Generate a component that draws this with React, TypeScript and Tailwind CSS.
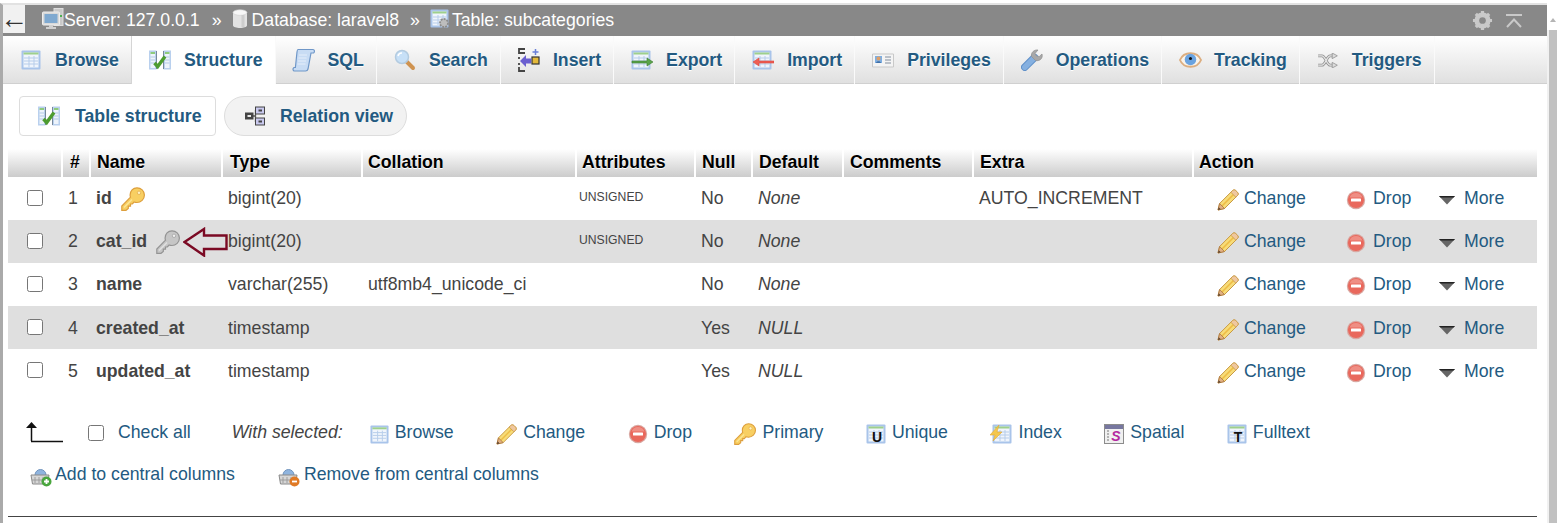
import React from "react";

type IP = { className?: string };

const GridTable = ({ x = 1, y = 1, w = 18, h = 18 }: { x?: number; y?: number; w?: number; h?: number }) => (
  <g>
    <rect x={x - 0.5} y={y - 0.5} width={w + 1} height={h + 1} rx="1" fill="#a9c4ea" />
    <rect x={x + 1.5} y={y + 1.5} width={w - 3} height={h - 3} fill="#f0f5fc" />
    <rect x={x + 1.5} y={y + 1.5} width={w - 3} height="2" fill="#9ed08c" />
    <path
      d={`M${x + 2} ${y + 7}H${x + w - 2}M${x + 2} ${y + 10}H${x + w - 2}M${x + 2} ${y + 13}H${x + w - 2}M${x + 7} ${y + 5}V${y + h - 2}M${x + 12} ${y + 5}V${y + h - 2}`}
      stroke="#b7cdea"
      strokeWidth="1"
      fill="none"
    />
  </g>
);

const BrowseIcon = ({ className }: IP) => (
  <svg viewBox="0 0 20 20" className={className}>
    <GridTable />
  </svg>
);

const StructureIcon = ({ className }: IP) => (
  <svg viewBox="0 0 22 20" className={className}>
    <rect x="0" y="0.500" width="7.500" height="19" fill="#b9d0ee" />
    <rect x="14.500" y="0.500" width="7.500" height="19" fill="#b9d0ee" />
    <rect x="1.500" y="2" width="4.500" height="16" fill="#eef4fb" />
    <rect x="16" y="2" width="4.500" height="16" fill="#eef4fb" />
    <path d="M1.500 3h4.500M16 3h4.500" stroke="#8ecb7c" strokeWidth="2" />
    <path d="M1.500 7h4.500M1.500 10h4.500M1.500 13h4.500M16 7h4.500M16 10h4.500M16 13h4.500" stroke="#b3c9e6" strokeWidth="1" />
    <path d="M7.500 1v18M14.500 1v18" stroke="#77889a" strokeWidth="1" />
    <path d="M5.500 13l3.200 3.500L16 6.500" stroke="#4d9c2f" strokeWidth="3.400" fill="none" />
  </svg>
);

const SqlIcon = ({ className }: IP) => (
  <svg viewBox="0 0 24 24" className={className}>
    <path d="M6 1.500h15c1.600 0 2 2.400.6 3.500H19L16 21c-.4 1.500-1.200 2-2.400 2H2.500c-1.600 0-2.200-2.500-.5-3.500h1.400L5 4C5.200 2.500 5.400 1.500 6 1.500z" fill="#c8dcf4" stroke="#6f97c8" strokeWidth="1.200" />
    <path d="M7 7h8M6.500 10h8M6 13h8M5.500 16h8" stroke="#e5eefa" strokeWidth="1" />
  </svg>
);

const SearchIcon = ({ className }: IP) => (
  <svg viewBox="0 0 22 22" className={className}>
    <path d="M12.500 12.500l6.500 6.500" stroke="#cf9350" strokeWidth="4" strokeLinecap="round" />
    <circle cx="8" cy="8" r="6.500" fill="#c7e0f7" stroke="#b3cbe0" strokeWidth="1.500" />
    <path d="M4 7a4 4 0 0 1 4-3" stroke="#fff" strokeWidth="1.500" fill="none" />
  </svg>
);

const InsertIcon = ({ className }: IP) => (
  <svg viewBox="0 0 22 24" className={className}>
    <path d="M7 1H1v4h6M1 9v2M1 15v2M1 19v4h6" stroke="#444" strokeWidth="1.800" fill="none" />
    <path d="M2 13l6-6v3.500h5v5H8V19z" fill="#6a5fd0" />
    <rect x="14" y="9" width="7" height="7" fill="#e4b93a" stroke="#333" strokeWidth="1.200" />
    <path d="M17.500 1v6M14.500 4h6" stroke="#6a7fd8" strokeWidth="1.500" />
  </svg>
);

const ExportIcon = ({ className }: IP) => (
  <svg viewBox="0 0 22 20" className={className}>
    <GridTable w={18} h={18} />
    <path d="M1 11h15V8l6 4-6 4v-3H1z" fill="#5aa44b" stroke="#3c7c30" strokeWidth=".6" />
  </svg>
);

const ImportIcon = ({ className }: IP) => (
  <svg viewBox="0 0 22 20" className={className}>
    <GridTable w={18} h={18} />
    <path d="M22 11H7V8l-6 4 6 4v-3h15z" fill="#ef5e54" stroke="#d8473d" strokeWidth=".6" />
  </svg>
);

const PrivilegesIcon = ({ className }: IP) => (
  <svg viewBox="0 0 22 16" className={className}>
    <path d="M.5 2h21v13H.5z" fill="#f4f4f4" stroke="#c9c9c9" />
    <rect x="3" y="4" width="7" height="7" fill="#7eaee0" />
    <circle cx="6.500" cy="6.500" r="2" fill="#dda06a" />
    <path d="M4 11c.5-2.500 4.500-2.500 5 0z" fill="#3f6fa8" />
    <path d="M13 5h6M13 8h6M13 11h6" stroke="#a8b0bb" strokeWidth="1.300" />
  </svg>
);

const WrenchIcon = ({ className }: IP) => (
  <svg viewBox="0 0 22 22" className={className}>
    <path d="M3.800 18.200L13.500 8.500" stroke="#5f90c9" strokeWidth="7.500" strokeLinecap="round" />
    <path d="M3.800 18.200L13.500 8.500" stroke="#85b0e0" strokeWidth="5.500" strokeLinecap="round" />
    <path d="M10.500 7.500C9.800 3.500 13 .5 17 1l-3 3.500 1.500 2.500 2.800.5L21 5c1.200 4-2 7.500-6.500 6.500z" fill="#a8a8a8" stroke="#909090" strokeWidth=".7" />
  </svg>
);

const EyeIcon = ({ className }: IP) => (
  <svg viewBox="0 0 24 18" className={className}>
    <path d="M1 9c4-9.500 18-9.500 22 0-4 9.500-18 9.500-22 0z" fill="#f9f3ea" stroke="#dcae80" strokeWidth="2" />
    <circle cx="12" cy="8.500" r="6" fill="#6aa3e0" />
    <circle cx="12" cy="7.500" r="1.600" fill="#111" />
  </svg>
);

const TriggersIcon = ({ className }: IP) => (
  <svg viewBox="0 0 22 16" className={className}>
    <path d="M1 3h4c4 0 5 10 9 10h3M1 13h4c4 0 5-10 9-10h3" fill="none" stroke="#8f8f8f" strokeWidth="3" />
    <path d="M1 3h4c4 0 5 10 9 10h3M1 13h4c4 0 5-10 9-10h3" fill="none" stroke="#e6e6e6" strokeWidth="1.400" />
    <path d="M16 0l5.500 3L16 6zM16 10l5.500 3-5.500 3z" fill="#dcdcdc" stroke="#8c8c8c" strokeWidth=".8" />
  </svg>
);

const RelationIcon = ({ className }: IP) => (
  <svg viewBox="0 0 20 20" className={className}>
    <path d="M8 10h3M10.500 4v12" stroke="#555" strokeWidth="1.300" fill="none" />
    <rect x="0" y="6.500" width="8.500" height="7" fill="#444" />
    <rect x="2.500" y="9" width="3.500" height="2" fill="#e8e8e8" />
    <rect x="10.500" y="1" width="9" height="7" fill="#c9c9ee" stroke="#444" />
    <rect x="10.500" y="12" width="9" height="7" fill="#c9c9ee" stroke="#444" />
    <rect x="13.500" y="3.500" width="3.500" height="2" fill="#444" />
    <rect x="13.500" y="14.500" width="3.500" height="2" fill="#444" />
  </svg>
);

const KeyIcon = ({ className, gray }: IP & { gray?: boolean }) => {
  const fill = gray ? "#c6c6c6" : "#f8cf62";
  const stroke = gray ? "#949494" : "#dd9f3d";
  return (
    <svg viewBox="0 0 24 24" className={className}>
      <path
        d="M16 .8c4 0 7.400 3.200 7.400 7.200 0 4.200-3.500 7.500-7.500 7.500-1 0-2-.2-2.800-.5l-1.800 2H9.500v2.200H7.300v2.300L5 23.300H.8v-4.300l8.700-8.800c-.3-.8-.4-1.500-.4-2.200C9.100 4 12 .8 16 .8z"
        fill={fill}
        stroke={stroke}
        strokeWidth="1.200"
      />
      <circle cx="18" cy="5.800" r="1.700" fill={gray ? "#efefef" : "#fff2c0"} stroke={stroke} strokeWidth=".6" />
      <path d="M3 20.500l8-8" stroke={gray ? "#e2e2e2" : "#fce79b"} strokeWidth="1.200" />
    </svg>
  );
};

const PencilIcon = ({ className }: IP) => (
  <svg viewBox="0 0 22 22" className={className}>
    <path d="M1 21l1.600-6.500L15.500 1.600c1-.9 2.400-.9 3.200-.1l1.900 1.900c.8.900.8 2.200-.1 3.100L7.500 19.500z" fill="#f7dc78" stroke="#c99a45" strokeWidth="1" />
    <path d="M5 17L17.500 4.500" stroke="#eebc45" strokeWidth="1.600" />
    <path d="M1 21l1.600-6.500 4.900 5z" fill="#e2b184" stroke="#a9743e" strokeWidth=".8" />
    <path d="M1 21l.7-2.800 2.100 2.100z" fill="#5a4330" />
    <path d="M15.500 1.600c1-.9 2.400-.9 3.200-.1l1.900 1.900c.8.900.8 2.200-.1 3.100l-1.700 1.700-5-5z" fill="#efc79f" stroke="#c99a45" strokeWidth=".8" />
  </svg>
);

const DropIcon = ({ className }: IP) => (
  <svg viewBox="0 0 20 20" className={className}>
    <circle cx="10" cy="10" r="9.200" fill="#d9a8a2" />
    <circle cx="10" cy="10" r="8" fill="#e9685c" />
    <path d="M3.500 7.500A7 7 0 0 1 16.500 7.500z" fill="#ef8e84" />
    <rect x="5" y="8.400" width="10" height="3.200" rx=".6" fill="#fff" />
  </svg>
);

const MoreIcon = ({ className }: IP) => (
  <svg viewBox="0 0 16 10" className={className}>
    <path d="M0 1h16L8 9.500z" fill="#666" />
    <path d="M0 1h16l-1.500 1.500h-13z" fill="#222" />
  </svg>
);

const UniqueIcon = ({ className }: IP) => (
  <svg viewBox="0 0 20 20" className={className}>
    <GridTable />
    <text x="11" y="18" textAnchor="middle" fontFamily="Liberation Sans" fontWeight="700" fontSize="14" fill="#111">U</text>
  </svg>
);

const FulltextIcon = ({ className }: IP) => (
  <svg viewBox="0 0 20 20" className={className}>
    <GridTable />
    <text x="11" y="18" textAnchor="middle" fontFamily="Liberation Sans" fontWeight="700" fontSize="14" fill="#111">T</text>
  </svg>
);

const IndexIcon = ({ className }: IP) => (
  <svg viewBox="0 0 22 20" className={className}>
    <GridTable x={3} w={18} />
    <path d="M9 1L0 11h5l-2 6 9-9H7z" fill="#f4c74d" stroke="#e0a93a" strokeWidth=".6" />
  </svg>
);

const SpatialIcon = ({ className }: IP) => (
  <svg viewBox="0 0 20 20" className={className}>
    <rect x=".5" y=".5" width="19" height="19" fill="#f0f0f0" stroke="#8c8c8c" />
    <rect x="1" y="1" width="18" height="4" fill="#77779f" />
    <path d="M4 6v12" stroke="#777" strokeWidth="1" strokeDasharray="2 1" />
    <text x="12" y="17" textAnchor="middle" fontFamily="Liberation Sans" fontWeight="700" fontStyle="italic" fontSize="14" fill="#b4299f">S</text>
  </svg>
);

const BasketIcon = ({ className, remove }: IP & { remove?: boolean }) => (
  <svg viewBox="0 0 22 20" className={className}>
    <path d="M5 8a5.500 5.500 0 0 1 11 0" fill="#8fb4de" stroke="#6f93bd" />
    <path d="M1 8h18l-1.500 9h-15z" fill="#d6d6d6" stroke="#8a8a8a" />
    <path d="M5 10v6M9 10v6M13 10v6M2 13h16" stroke="#999" strokeWidth=".9" />
    <circle cx="16.500" cy="14.500" r="5" fill={remove ? "#e07a25" : "#4aa63e"} />
    {remove ? <path d="M14 14.500h5" stroke="#fff" strokeWidth="1.800" /> : <path d="M14 14.500h5M16.500 12v5" stroke="#fff" strokeWidth="1.800" />}
  </svg>
);

const ServerIcon = ({ className }: IP) => (
  <svg viewBox="0 0 22 22" className={className}>
    <rect x="12" y="0.500" width="9" height="17" fill="#c9c9c9" stroke="#dedede" />
    <rect x="0.500" y="4" width="17" height="13" rx="1" fill="#d9d9d9" stroke="#eee" />
    <rect x="2.500" y="6" width="13" height="9" fill="#7fa9d0" />
    <path d="M7 17h4v2h3v2H4v-2h3z" fill="#cfcfcf" />
    <rect x="18" y="7" width="2" height="2" fill="#4caf50" />
  </svg>
);

const DbIcon = ({ className }: IP) => (
  <svg viewBox="0 0 16 20" className={className}>
    <path d="M1 3.500v13c0 3.300 14 3.300 14 0v-13z" fill="#e2e2e2" />
    <ellipse cx="8" cy="3.500" rx="7" ry="2.800" fill="#f7f7f7" stroke="#cfcfcf" strokeWidth=".6" />
    <path d="M11 6v12" stroke="#cdcdcd" strokeWidth="3" />
  </svg>
);

const TableGearIcon = ({ className }: IP) => (
  <svg viewBox="0 0 20 20" className={className}>
    <GridTable w={17} h={17} />
    <circle cx="14" cy="14" r="4" fill="#bdbdbd" stroke="#8c8c8c" strokeWidth="1.800" strokeDasharray="2 1" />
  </svg>
);

const GearIcon = ({ className }: IP) => (
  <svg viewBox="0 0 22 22" className={className}>
    <circle cx="11" cy="11" r="6.500" fill="none" stroke="#c9c9c9" strokeWidth="4" />
    <path d="M11 1v20M1 11h20M4 4l14 14M18 4L4 18" stroke="#c9c9c9" strokeWidth="3.400" />
    <circle cx="11" cy="11" r="3.500" fill="#888" />
  </svg>
);

const CollapseIcon = ({ className }: IP) => (
  <svg viewBox="0 0 16 14" className={className}>
    <path d="M0 1h16" stroke="#c9c9c9" strokeWidth="2" />
    <path d="M1 13l7-7.500 7 7.500" stroke="#c9c9c9" strokeWidth="2" fill="none" />
  </svg>
);

const tabs: { label: string; icon: React.ReactNode; active?: boolean }[] = [
  { label: "Browse", icon: <BrowseIcon className="w-5 h-5" /> },
  { label: "Structure", icon: <StructureIcon className="w-[22px] h-5" />, active: true },
  { label: "SQL", icon: <SqlIcon className="w-6 h-6" /> },
  { label: "Search", icon: <SearchIcon className="w-[22px] h-[22px]" /> },
  { label: "Insert", icon: <InsertIcon className="w-[22px] h-6" /> },
  { label: "Export", icon: <ExportIcon className="w-[22px] h-5" /> },
  { label: "Import", icon: <ImportIcon className="w-[22px] h-5" /> },
  { label: "Privileges", icon: <PrivilegesIcon className="w-[22px] h-4" /> },
  { label: "Operations", icon: <WrenchIcon className="w-[22px] h-[22px]" /> },
  { label: "Tracking", icon: <EyeIcon className="w-[23px] h-[18px]" /> },
  { label: "Triggers", icon: <TriggersIcon className="w-[21px] h-[15px]" /> },
];

const rows = [
  { n: 1, name: "id", type: "bigint(20)", coll: "", attr: "UNSIGNED", nul: "No", def: "None", extra: "AUTO_INCREMENT", key: "gold" },
  { n: 2, name: "cat_id", type: "bigint(20)", coll: "", attr: "UNSIGNED", nul: "No", def: "None", extra: "", key: "gray" },
  { n: 3, name: "name", type: "varchar(255)", coll: "utf8mb4_unicode_ci", attr: "", nul: "No", def: "None", extra: "", key: "" },
  { n: 4, name: "created_at", type: "timestamp", coll: "", attr: "", nul: "Yes", def: "NULL", extra: "", key: "" },
  { n: 5, name: "updated_at", type: "timestamp", coll: "", attr: "", nul: "Yes", def: "NULL", extra: "", key: "" },
];

const headers: [string, string][] = [
  ["", "w-[54px] px-[6px]"],
  ["#", "w-[28px] px-[7px]"],
  ["Name", "w-[132px] px-[6px]"],
  ["Type", "w-[140px] pl-[7px] pr-[5px]"],
  ["Collation", "w-[214px] pl-[5px] pr-[6px]"],
  ["Attributes", "w-[119px] pl-[5px] pr-[6px]"],
  ["Null", "w-[57px] px-[6px]"],
  ["Default", "w-[91px] px-[6px]"],
  ["Comments", "w-[130px] px-[6px]"],
  ["Extra", "w-[220px] px-[6px]"],
  ["Action", "w-[344px] pl-[5px] pr-[6px]"],
];

const bulk: { label: string; icon: React.ReactNode }[] = [
  { label: "Browse", icon: <BrowseIcon className="w-[19px] h-[19px]" /> },
  { label: "Change", icon: <PencilIcon className="w-[21px] h-[21px]" /> },
  { label: "Drop", icon: <DropIcon className="w-5 h-5" /> },
  { label: "Primary", icon: <KeyIcon className="w-[22px] h-[22px]" /> },
  { label: "Unique", icon: <UniqueIcon className="w-5 h-5" /> },
  { label: "Index", icon: <IndexIcon className="w-[22px] h-5" /> },
  { label: "Spatial", icon: <SpatialIcon className="w-5 h-5" /> },
  { label: "Fulltext", icon: <FulltextIcon className="w-5 h-5" /> },
];

const shadowW = "[text-shadow:0_1px_0_#fff]";

export default function App() {
  return (
    <div className="w-[1557px] h-[523px] overflow-hidden bg-white flex flex-col text-[17.7px] leading-none text-[#444] font-['Liberation_Sans',Arial,sans-serif]">
      <div className="h-[3px] shrink-0 bg-white" />
      <div className="flex flex-1 min-h-0">
        <div className="w-[1547px] flex flex-col border-l-[3px] border-l-[#aaaaaa] border-t-2 border-t-[#e2e2e2] relative">
          {/* breadcrumb */}
          <div className="h-[31px] shrink-0 bg-[#888888] flex items-center text-white">
            <div className="w-[22px] h-[28px] -mt-[3px] bg-[#f1f1f1] text-[#333] text-[28px] flex items-center justify-center">←</div>
            <div className="flex items-center ml-[17px]">
              <ServerIcon className="w-[22px] h-[22px] -mt-[4px]" />
              <span>Server: 127.0.0.1</span>
              <span className="ml-[12px] mr-[10px]">»</span>
              <DbIcon className="w-[16px] h-[20px] -mt-[3px]" />
              <span className="ml-[4px]">Database: laravel8</span>
              <span className="ml-[11px] mr-[10px]">»</span>
              <TableGearIcon className="w-5 h-5 -mt-[3px]" />
              <span className="ml-[2px]">Table: subcategories</span>
            </div>
            <div className="ml-auto flex items-center mr-[25px] gap-[13px]">
              <GearIcon className="w-[21px] h-[21px]" />
              <CollapseIcon className="w-[16px] h-[14px]" />
            </div>
          </div>

          {/* tabs */}
          <div className="h-[48px] shrink-0 flex bg-gradient-to-b from-white to-[#e0e0e0] border-b border-b-[#d0d0d0]">
            {tabs.map((t) => (
              <div
                key={t.label}
                className={`h-[48px] flex items-center pl-4 pr-3 border-r border-r-[#fafafa] ${t.active ? "bg-white border-l border-l-[#d5d5d5] -ml-px" : ""}`}
              >
                <span className="w-6 flex justify-center mr-3 shrink-0">{t.icon}</span>
                <span className={`font-bold pt-px text-[#235a81] ${shadowW}`}>{t.label}</span>
              </div>
            ))}
          </div>

          {/* sub tabs */}
          <div className="flex items-center gap-2 h-[40px] mt-3 ml-4 shrink-0">
            <div className="h-[40px] w-[197px] flex items-center pl-[18px] bg-white rounded border border-[#dddddd]">
              <StructureIcon className="w-[22px] h-5" />
              <span className="ml-[15px] pt-px font-bold text-[#235a81]">Table structure</span>
            </div>
            <div className="h-[40px] w-[183px] flex items-center pl-[20px] rounded-[20px] border border-[#dddddd] bg-[#f2f2f2]">
              <RelationIcon className="w-5 h-5" />
              <span className="ml-[15px] pt-px font-bold text-[#235a81]">Relation view</span>
            </div>
          </div>

          {/* table */}
          <table className="table-fixed border-collapse w-[1529px] ml-[5px] mt-[13px] shrink-0">
            <thead>
              <tr className="h-[28px]">
                {headers.map(([h, w], i) => (
                  <th
                    key={i}
                    className={`${w} text-left ${i < 10 ? "border-r-2 border-r-white" : ""} py-0 font-bold text-black bg-gradient-to-b from-white to-[#cccccc] ${shadowW}`}
                  >
                    {h}
                  </th>
                ))}
              </tr>
            </thead>
            <tbody>
              {rows.map((r) => {
                const low = r.n >= 4 ? "pt-[2px]" : "";
                return (
                  <tr key={r.n} className={`h-[43px] ${r.n % 2 === 0 ? "bg-[#dfdfdf]" : "bg-white"}`}>
                    <td className="p-0">
                      <input type="checkbox" className="block mx-auto -mt-px w-4 h-4" readOnly />
                    </td>
                    <td className={`pl-[6px] ${low}`}>{r.n}</td>
                    <td className={`px-[6px] ${low}`}>
                      <div className="flex items-center relative">
                        <span className="font-bold">{r.name}</span>
                        {r.key === "gold" && <KeyIcon className="w-[24px] h-[24px] ml-[9px]" />}
                        {r.key === "gray" && (
                          <>
                            <KeyIcon gray className="w-[24px] h-[24px] ml-[9px]" />
                            <svg viewBox="0 0 46 30" className="absolute left-[87px] -top-[3px] w-[46px] h-[30px]">
                              <path d="M1.500 15L21 2v6.500h22.500v13.500H21v6.500z" fill="none" stroke="#7b0a24" strokeWidth="2.400" />
                            </svg>
                          </>
                        )}
                      </div>
                    </td>
                    <td className={`px-[6px] ${low}`}>{r.type}</td>
                    <td className={`px-[6px] ${low}`}>{r.coll}</td>
                    <td className="px-[3px] pb-[2px] text-[12.2px]">{r.attr}</td>
                    <td className={`px-[6px] ${low}`}>{r.nul}</td>
                    <td className={`px-[6px] italic ${low}`}>{r.def}</td>
                    <td className="px-[6px]" />
                    <td className={`px-[6px] ${low}`}>{r.extra}</td>
                    <td className={`pl-[24px] ${low}`}>
                      <div className="flex items-center text-[#235a81]">
                        <div className="w-[129px] flex items-center">
                          <PencilIcon className="w-[22px] h-[22px] mt-[3px]" />
                          <span className="ml-[5px]">Change</span>
                        </div>
                        <div className="w-[93px] flex items-center">
                          <DropIcon className="w-5 h-5 mt-[3px]" />
                          <span className="ml-[7px]">Drop</span>
                        </div>
                        <div className="flex items-center">
                          <MoreIcon className="w-4 h-[10px] mt-[3px]" />
                          <span className="ml-[9px]">More</span>
                        </div>
                      </div>
                    </td>
                  </tr>
                );
              })}
            </tbody>
          </table>

          {/* bulk row */}
          <div className="flex items-center mt-[28px] h-[26px] ml-[22px] text-[#235a81] shrink-0">
            <svg viewBox="0 0 38 22" className="w-[38px] h-[22px] -mt-[2px]">
              <path d="M6.500 20V5" stroke="#111" strokeWidth="1.500" />
              <path d="M1 7l5.500-6L12 7z" fill="#111" />
              <path d="M6 20.500h32" stroke="#111" strokeWidth="1.500" />
            </svg>
            <input type="checkbox" className="w-4 h-4 ml-[25px]" readOnly />
            <span className="ml-[14px]">Check all</span>
            <span className="ml-[41px] italic text-[#444]">With selected:</span>
            <div className="flex items-center gap-[42.5px] ml-[27px]">
              {bulk.map((b) => (
                <div key={b.label} className="flex items-center">
                  <span className="mt-[2px]">{b.icon}</span>
                  <span className="ml-[6px]">{b.label}</span>
                </div>
              ))}
            </div>
          </div>

          {/* central columns */}
          <div className="flex items-center mt-4 h-[26px] ml-[27px] gap-[43px] text-[#235a81] shrink-0">
            <div className="flex items-center">
              <BasketIcon className="w-[22px] h-5 mt-[3px]" />
              <span className="ml-[3px]">Add to central columns</span>
            </div>
            <div className="flex items-center">
              <BasketIcon remove className="w-[22px] h-5 mt-[3px]" />
              <span className="ml-[4px]">Remove from central columns</span>
            </div>
          </div>

          <div className="h-px bg-[#444] w-[1529px] ml-[5px] mt-[28px] shrink-0" />
        </div>

        {/* scrollbar */}
        <div className="w-[10px] bg-[#f1f1f1] flex flex-col shrink-0">
          <div className="h-[27px] bg-white flex justify-end items-start pt-[15px] pr-px">
            <svg viewBox="0 0 6 4" className="w-[6px] h-1">
              <path d="M0 4l3-4 3 4z" fill="#b5b5b5" />
            </svg>
          </div>
          <div className="flex-1 ml-[2px] bg-[#c1c1c1]" />
        </div>
      </div>
    </div>
  );
}
